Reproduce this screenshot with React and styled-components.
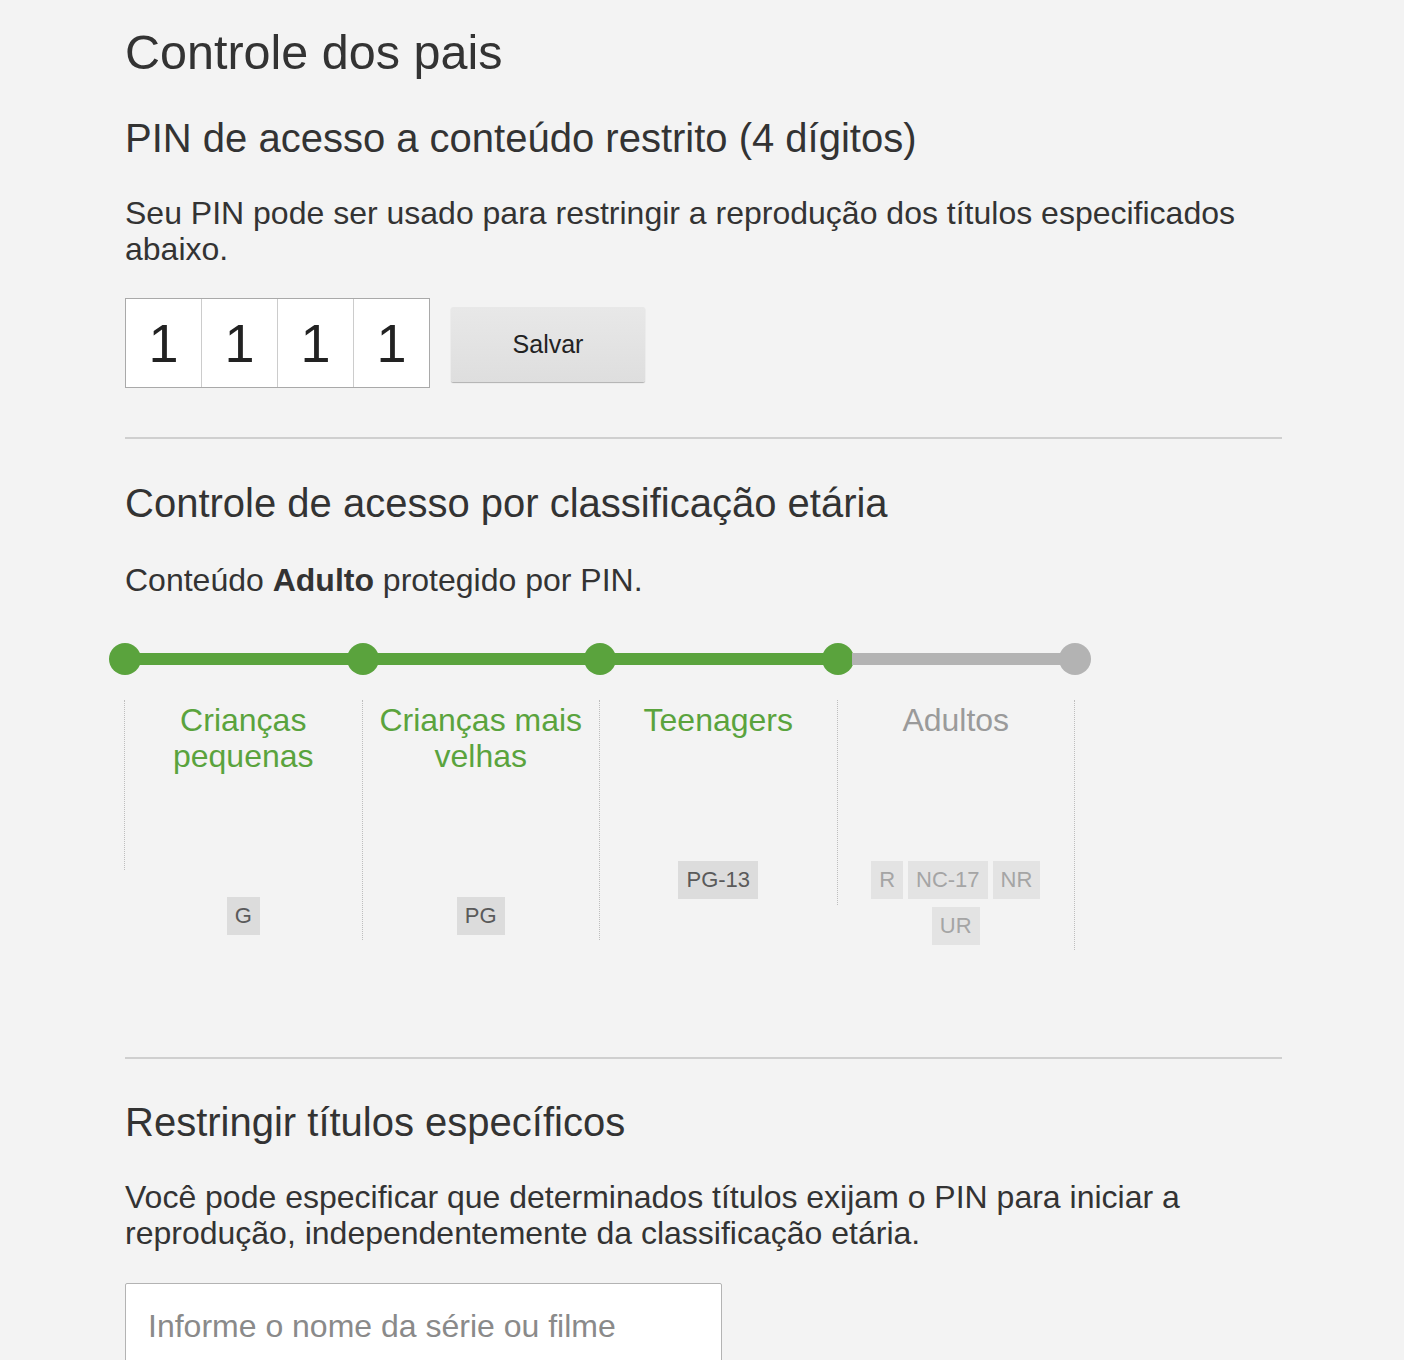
import React from "react";
import styled, {createGlobalStyle} from "styled-components";

const colors = {
    page: "#f3f3f3",
    text: "#333333",
    green: "#5aa33d",
    grey: "#b3b3b3",
    dotted: "#bdbdbd",
    rule: "#cfcfcf",
};

const GlobalStyle = createGlobalStyle`
  body {
    margin: 0;
    background: ${colors.page};
    font-family: "Liberation Sans", Arial, sans-serif;
    color: ${colors.text};
  }
`;

const Page = styled.div`
  width: 1157px;
  padding: 24px 0 0 125px;
  min-height: 1336px;
`;

const Title = styled.h1`
  margin: 0;
  font-size: 48.5px;
  line-height: 57.6px;
  font-weight: 400;
`;

const SectionTitle = styled.h2`
  margin: ${p => p.$top || 0}px 0 0;
  font-size: 40px;
  line-height: 48px;
  font-weight: 400;
`;

const Text = styled.p`
  margin: ${p => p.$top || 33}px 0 0;
  font-size: 32px;
  line-height: 36px;
  b {
    font-weight: 700;
  }
`;

const PinRow = styled.div`
  display: flex;
  align-items: center;
  margin-top: 31px;
`;

const PinBox = styled.div`
  display: flex;
  border: 1px solid #a9a9a9;
  background: #fff;
`;

const PinDigit = styled.input`
  height: 88px;
  box-sizing: border-box;
  border: none;
  border-left: ${p => (p.$first ? "none" : "1px solid #cccccc")};
  width: ${p => (p.$first ? 75 : 76)}px;
  background: #fff;
  font-family: inherit;
  font-size: 54px;
  color: #222;
  text-align: center;
  padding: 0;
  outline: none;
`;

const SaveButton = styled.button`
  margin: 3px 0 0 21px;
  width: 194px;
  height: 75px;
  border: none;
  border-radius: 2px;
  background: linear-gradient(#e8e8e8, #dedede);
  box-shadow: 0 1px 1px rgba(0, 0, 0, 0.28);
  font-family: inherit;
  font-size: 25px;
  color: #222;
  cursor: pointer;
`;

const Rule = styled.hr`
  margin: ${p => p.$top}px 0 0;
  border: none;
  border-top: 2px solid ${colors.rule};
  height: 0;
`;

const Track = styled.div`
  display: flex;
  align-items: center;
  width: 982px;
  margin: 45px 0 0 -16px;
`;

const Dot = styled.span`
  flex: none;
  width: 32px;
  height: 32px;
  border-radius: 50%;
  background: ${p => (p.$on ? colors.green : colors.grey)};
`;

const Bar = styled.span`
  flex: 1;
  height: 12px;
  margin: 0 -2px;
  background: ${p => (p.$on ? colors.green : colors.grey)};
`;

const Levels = styled.div`
  display: flex;
  align-items: flex-start;
  margin: 25px 0 0 -1px;
`;

const Level = styled.div`
  width: 237.5px;
  height: ${p => p.$line}px;
  box-sizing: border-box;
  border-left: 1px dotted ${colors.dotted};
  padding-top: 2px;
  display: flex;
  flex-direction: column;
  align-items: center;
`;

const LevelEnd = styled.div`
  height: ${p => p.$line}px;
  border-left: 1px dotted ${colors.dotted};
`;

const LevelName = styled.div`
  padding: 0 10px;
  font-size: 32px;
  line-height: 36px;
  text-align: center;
  color: ${p => (p.$on ? colors.green : "#9a9a9a")};
`;

const Ratings = styled.div`
  margin-top: 123px;
  width: 190px;
  display: flex;
  flex-wrap: wrap;
  justify-content: center;
  gap: 8px 5px;
`;

const Rating = styled.span`
  height: 38px;
  padding: 0 8px;
  background: ${p => (p.$on ? "#dcdcdc" : "#e3e3e3")};
  color: ${p => (p.$on ? "#5a5a5a" : "#a5a5a5")};
  font-size: 22px;
  line-height: 38px;
`;

const SearchInput = styled.input`
  display: block;
  margin-top: 32px;
  width: 597px;
  height: 88px;
  box-sizing: border-box;
  border: 1px solid #b3b3b3;
  border-radius: 2px;
  background: #fff;
  padding: 0 22px;
  font-family: inherit;
  font-size: 32px;
  color: #333;
  outline: none;
  &::placeholder {
    color: #8a8a8a;
  }
`;

const levels = [
    {name: "Crianças pequenas", ratings: ["G"], on: true, line: 170},
    {name: "Crianças mais velhas", ratings: ["PG"], on: true, line: 240},
    {name: "Teenagers", ratings: ["PG-13"], on: true, line: 240},
    {name: "Adultos", ratings: ["R", "NC-17", "NR", "UR"], on: false, line: 205},
];

const App = () => {
    return (
        <Page>
            <GlobalStyle />
            <Title>Controle dos pais</Title>
            <SectionTitle $top={32}>PIN de acesso a conteúdo restrito (4 dígitos)</SectionTitle>
            <Text>Seu PIN pode ser usado para restringir a reprodução dos títulos especificados abaixo.</Text>
            <PinRow>
                <PinBox>
                    {[0, 1, 2, 3].map(i => (
                        <PinDigit key={i} $first={i === 0} type="text" maxLength={1} defaultValue="1" />
                    ))}
                </PinBox>
                <SaveButton type="button">Salvar</SaveButton>
            </PinRow>

            <Rule $top={49} />

            <SectionTitle $top={40}>Controle de acesso por classificação etária</SectionTitle>
            <Text $top={35}>Conteúdo <b>Adulto</b> protegido por PIN.</Text>

            <Track>
                {levels.map((item, i) => (
                    <React.Fragment key={item.name}>
                        <Dot $on={item.on || levels[i - 1]?.on || i === 0} />
                        <Bar $on={item.on} />
                    </React.Fragment>
                ))}
                <Dot $on={false} />
            </Track>

            <Levels>
                {levels.map(item => (
                    <Level key={item.name} $line={item.line}>
                        <LevelName $on={item.on}>{item.name}</LevelName>
                        <Ratings>
                            {item.ratings.map(r => (
                                <Rating key={r} $on={item.on}>{r}</Rating>
                            ))}
                        </Ratings>
                    </Level>
                ))}
                <LevelEnd $line={250} />
            </Levels>

            <Rule $top={107} />

            <SectionTitle $top={39}>Restringir títulos específicos</SectionTitle>
            <Text>Você pode especificar que determinados títulos exijam o PIN para iniciar a reprodução, independentemente da classificação etária.</Text>
            <SearchInput type="text" placeholder="Informe o nome da série ou filme" />
        </Page>
    );
};

export default App;
